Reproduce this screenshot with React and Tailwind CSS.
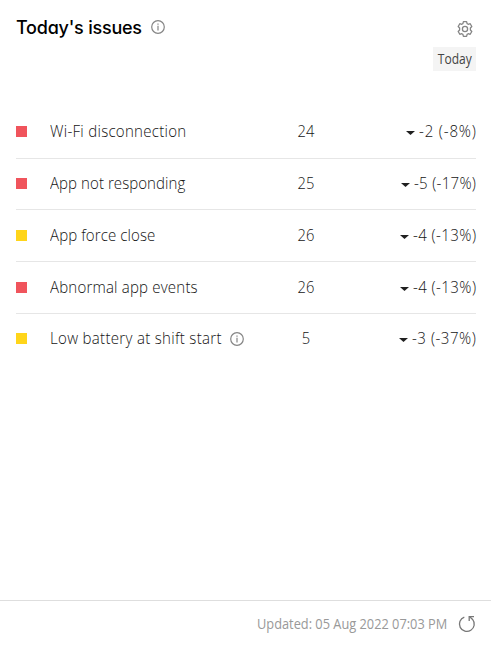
const rows = [
  { name: "Wi-Fi disconnection", count: 24, change: "-2 (-8%)", color: "bg-[#f0545c]", height: "h-[53px]", spacing: "tracking-[0.3px]", changeSpacing: "tracking-[0.88px]", changeWidth: "w-[57px]" },
  { name: "App not responding", count: 25, change: "-5 (-17%)", color: "bg-[#f0545c]", height: "h-[51px]", spacing: "tracking-[0.06px]", changeSpacing: "tracking-[0.3px]", changeWidth: "w-[62px]" },
  { name: "App force close", count: 26, change: "-4 (-13%)", color: "bg-[#ffd51a]", height: "h-[52px]", spacing: "tracking-[0.1px]", changeSpacing: "tracking-[0.44px]", changeWidth: "w-[63px]" },
  { name: "Abnormal app events", count: 26, change: "-4 (-13%)", color: "bg-[#f0545c]", height: "h-[52px]", spacing: "tracking-[0.2px]", changeSpacing: "tracking-[0.44px]", changeWidth: "w-[63px]" },
  { name: "Low battery at shift start", count: 5, change: "-3 (-37%)", color: "bg-[#ffd51a]", height: "h-[50px]", spacing: "tracking-[0.33px]", changeSpacing: "tracking-[0.55px]", changeWidth: "w-[64px]", info: true },
];

function InfoIcon() {
  return (
    <svg className="h-[14px] w-[14px] shrink-0" viewBox="0 0 14 14" fill="none" stroke="#858585">
      <circle cx="7" cy="7" r="6.3" strokeWidth="1.2" />
      <path d="M7 5.8v4.6M7 3.4v1.3" strokeWidth="1.2" />
    </svg>
  );
}

function GearIcon() {
  return (
    <svg className="h-4 w-4" viewBox="0 0 16 16" fill="none" stroke="#858585" strokeWidth="1.3" strokeLinejoin="round">
      <path d="M6.4 .7h3.2l.5 1.9 1.2.7 1.9-.6 1.6 2.8L13.4 7v2l1.4 1.5-1.6 2.8-1.9-.6-1.2.7-.5 1.9H6.4l-.5-1.9-1.2-.7-1.9.6-1.6-2.8L2.6 9V7L1.2 5.5l1.6-2.8 1.9.6 1.2-.7z" />
      <circle cx="8" cy="8" r="2.6" />
    </svg>
  );
}

function RefreshIcon() {
  return (
    <svg className="h-[18px] w-[18px]" viewBox="0 0 18 18" fill="none" stroke="#777" strokeWidth="1.3">
      <path d="M6.3 2.1A7.4 7.4 0 1 0 14.6 4.4L12 2" />
      <path d="M11.2 6V1.7H16" />
    </svg>
  );
}

export default function App() {
  return (
    <main className="flex h-[646px] w-[491px] flex-col bg-white font-['Open_Sans',sans-serif] text-[#141414]">
      <header className="flex h-[106px] justify-between pr-[15px] pl-4">
        <div className="flex h-[54px] items-center gap-[9px]">
          <h1 className="w-[126px] whitespace-nowrap pt-[2px] font-['Inter',sans-serif] text-[18px] leading-6 font-medium tracking-[-0.22px] text-[#000] [font-feature-settings:'cv11']">Today's issues</h1>
          <InfoIcon />
        </div>
        <div className="flex flex-col items-end pt-[21px]">
          <div className="pr-[3px]"><GearIcon /></div>
          <div className="mt-[10px] flex h-6 w-[43px] items-center justify-center bg-[#f4f4f4] text-[14px] font-normal text-[#444]"><span className="scale-x-[.86] pb-px">Today</span></div>
        </div>
      </header>
      <section className="flex flex-col px-4 pr-[15px] text-[16px] leading-6 font-[350]">
        {rows.map((row) => (
          <div key={row.name} className={`flex items-center border-b border-[#e6e6e6] last:border-b-0 ${row.height}`}>
            <span className={`mr-[23px] mb-px h-[11px] w-[11px] shrink-0 ${row.color}`} />
            <div className="flex w-[216px] items-center">
              <span className={`origin-left scale-x-[.94] whitespace-nowrap pb-[2px] ${row.spacing} ${row.info ? "w-[180px]" : ""}`}>{row.name}</span>
              {row.info && <InfoIcon />}
            </div>
            <span className="w-20 scale-x-[.92] pb-[2px] text-center">{row.count}</span>
            <div className="flex flex-1 items-center justify-end gap-1">
              <svg className="mt-[2px] h-1 w-[9px]" viewBox="0 0 9 4"><path d="M0 0h9L4.5 4z" fill="#202020" /></svg>
              <span className={`origin-left scale-x-[.94] whitespace-nowrap pb-[2px] ${row.changeSpacing} ${row.changeWidth}`}>{row.change}</span>
            </div>
          </div>
        ))}
      </section>
      <footer className="mt-auto flex h-[46px] items-center justify-end gap-[11px] border-t border-[#dedede] pr-[15px]">
        <span className="w-[190px] origin-left scale-x-[.914] whitespace-nowrap text-[14px] font-normal text-[#999]">Updated: 05 Aug 2022 07:03 PM</span>
        <RefreshIcon />
      </footer>
    </main>
  );
}
